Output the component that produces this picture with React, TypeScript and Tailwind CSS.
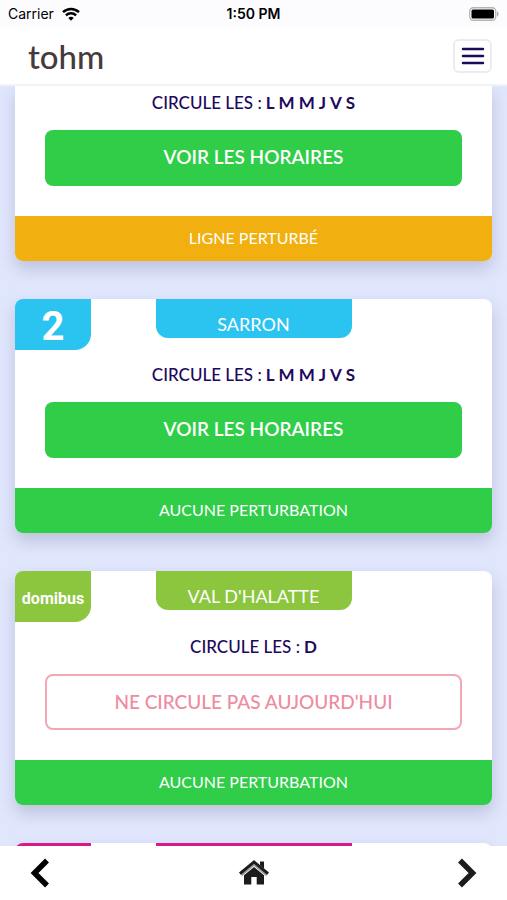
type Line = {
  id: string;
  label?: string;
  name?: string;
  color?: string;
  days?: string[];
  running?: boolean;
  disrupted?: boolean;
};

const lines: Line[] = [
  { id: "1", days: ["L", "M", "M", "J", "V", "S"], running: true, disrupted: true },
  { id: "2", label: "2", name: "SARRON", color: "bg-[#2bc4f1]", days: ["L", "M", "M", "J", "V", "S"], running: true },
  { id: "domibus", label: "domibus", name: "VAL D'HALATTE", color: "bg-[#8cc63f]", days: ["D"] },
  { id: "next", color: "bg-[#d9198a]" },
];

export default function App() {
  return (
    <div className="h-screen flex flex-col overflow-hidden bg-[#e0e6fc] font-['Lato',sans-serif]">
      <StatusBar />
      <Header />

      <main className="flex-1 min-h-0 overflow-hidden px-[15px]">
        <div className="flex flex-col gap-[38px]">
          {lines.map((line) => (
            <LineCard key={line.id} line={line} />
          ))}
        </div>
      </main>

      <BottomNav />
    </div>
  );
}

function StatusBar() {
  return (
    <div className="h-7 shrink-0 grid grid-cols-3 items-center px-2 bg-[#fcfcff] text-black text-sm font-['Inter',sans-serif]">
      <div className="flex items-center gap-2">
        <span>Carrier</span>
        <WifiIcon />
      </div>
      <span className="text-center font-semibold">1:50 PM</span>
      <div className="flex justify-end">
        <svg width="30" height="14" viewBox="0 0 30 14">
          <rect x="0.75" y="0.75" width="26" height="12.5" rx="3.5" fill="#fff" stroke="#b4b4b4" strokeWidth="1.3" />
          <rect x="2.5" y="2.5" width="22.5" height="9" rx="1.5" fill="#000" />
          <path d="M28 4.5v5c2-.8 2-4.2 0-5z" fill="#aaa" />
        </svg>
      </div>
    </div>
  );
}

function WifiIcon() {
  return (
    <svg width="18" height="14" viewBox="0 0 18 14" fill="none" stroke="#000" strokeWidth="2.5">
      <path d="M1 5.2a11.5 11.5 0 0 1 16 0" />
      <path d="M3.9 8.4a7.3 7.3 0 0 1 10.2 0" />
      <path d="M9 13.7 6.3 11a3.9 3.9 0 0 1 5.4 0z" fill="#000" stroke="none" />
    </svg>
  );
}

function Header() {
  return (
    <header className="h-[58px] shrink-0 flex items-center justify-between pl-7 pr-[15px] bg-white border-b-2 border-[#f3f3f7]">
      <a href="#" className="text-[33px] leading-8 font-medium text-[#463a3c]">tohm</a>
      <button aria-label="Menu" className="w-[39px] h-[34px] flex items-center justify-center rounded-md border-2 border-[#ececf0]">
        <svg width="24" height="20" viewBox="0 0 24 20" stroke="#1d0a5c" strokeWidth="2.5" strokeLinecap="round">
          <path d="M2 3h20M2 10h20M2 17h20" />
        </svg>
      </button>
    </header>
  );
}

function LineCard({ line }: { line: Line }) {
  const { label, name, color, days, running, disrupted } = line;

  return (
    <article className={`overflow-hidden bg-white shadow-[0_8px_16px_rgba(50,55,90,0.2)] ${color ? "rounded-lg" : "rounded-b-lg"}`}>
      {color && (
        <div className="h-16 grid grid-cols-[76px_1fr_76px] items-start">
          <div
            className={`h-[51px] pt-1 flex items-center justify-center rounded-br-2xl text-white font-bold font-['Roboto',sans-serif] ${color} ${label === "2" ? "text-[40px]" : "text-base"}`}
          >
            {label}
          </div>
          <h2 className={`w-[196px] h-[39px] justify-self-center flex items-end justify-center rounded-b-xl text-lg text-white ${color}`}>
            {name}
          </h2>
        </div>
      )}

      {days && (
        <>
          <div className={`px-[30px] pb-[30px] ${color ? "" : "pt-[5px]"}`}>
            <p className="flex justify-center gap-1 text-[17px] leading-6 font-medium text-[#1d0a5c]">
              <span>CIRCULE LES :</span>
              {days.map((day, i) => (
                <b key={i}>{day}</b>
              ))}
            </p>
            {running ? (
              <button className="mt-[15px] pb-0.5 w-full h-14 rounded-lg bg-[#30cd49] text-white text-[19px] font-semibold">
                VOIR LES HORAIRES
              </button>
            ) : (
              <button className="mt-[15px] w-full h-14 rounded-lg border-2 border-[#f4a6b5] text-[#ee8ba0] text-[19px] font-medium">
                NE CIRCULE PAS AUJOURD'HUI
              </button>
            )}
          </div>
          <div className={`h-[45px] pb-0.5 flex items-center justify-center text-base text-white ${disrupted ? "bg-[#f1b00f]" : "bg-[#30cd49]"}`}>
            {disrupted ? "LIGNE PERTURBÉ" : "AUCUNE PERTURBATION"}
          </div>
        </>
      )}
    </article>
  );
}

function BottomNav() {
  return (
    <nav className="h-[54px] shrink-0 grid grid-cols-3 items-center px-[30px] bg-white">
      <button aria-label="Précédent" className="justify-self-start">
        <svg width="20" height="30" viewBox="0 0 20 30" fill="none" stroke="#000" strokeWidth="5.5">
          <path d="M17 2.5 4.5 15 17 27.5" />
        </svg>
      </button>
      <button aria-label="Accueil" className="justify-self-center">
        <svg width="30" height="26" viewBox="0 0 30 26" fill="#1c1c1c">
          <path d="M15 7 5 15.2V24.500h7.300V17h5.400v7.500H25V15.200z" />
          <path d="M21 1.500h4v10l-4-3.500z" />
          <path d="M1.500 14.300 15 3l13.500 11.300" fill="none" stroke="#999" strokeWidth="4.5" />
          <path d="M1 13.600 15 2l14 11.600" fill="none" stroke="#1c1c1c" strokeWidth="2.8" />
        </svg>
      </button>
      <button aria-label="Suivant" className="justify-self-end">
        <svg width="20" height="30" viewBox="0 0 20 30" fill="none" stroke="#1c1c1c" strokeWidth="5.5">
          <path d="M3 2.5 15.5 15 3 27.5" />
        </svg>
      </button>
    </nav>
  );
}
